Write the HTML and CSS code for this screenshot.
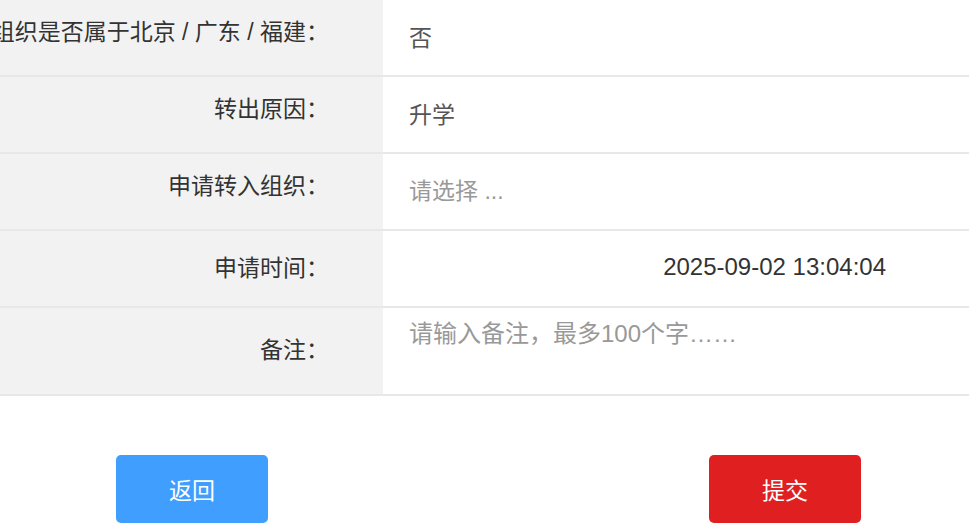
FILE: index.html
```html
<!DOCTYPE html>
<html lang="zh-CN">
<head>
    <meta charset="UTF-8">
    <meta name="viewport" content="width=device-width, initial-scale=1.0">
    <title>组织关系转接申请</title>
    <link rel="stylesheet" href="styles.css">
</head>
<body>
    <div class="form-table">
        <div class="row raised">
            <div class="label"><span>转出组织是否属于北京 / 广东 / 福建：</span></div>
            <div class="value">否</div>
        </div>
        <div class="row raised">
            <div class="label"><span>转出原因：</span></div>
            <div class="value">升学</div>
        </div>
        <div class="row raised">
            <div class="label"><span>申请转入组织：</span></div>
            <div class="value placeholder">请选择 ...</div>
        </div>
        <div class="row">
            <div class="label"><span>申请时间：</span></div>
            <div class="value date">2025-09-02 13:04:04</div>
        </div>
        <div class="row tall">
            <div class="label"><span>备注：</span></div>
            <div class="value">
                <textarea class="remark" placeholder="请输入备注，最多100个字……"></textarea>
            </div>
        </div>
    </div>

    <div class="actions">
        <button class="btn btn-back">返回</button>
        <button class="btn btn-submit">提交</button>
    </div>
</body>
</html>
```

FILE: styles.css
```css
* {
    box-sizing: border-box;
}
body {
    margin: 0;
    font-family: "Liberation Sans", "Noto Sans CJK SC", sans-serif;
    font-size: 23px;
    color: #333;
    background: #fff;
    overflow: hidden;
}
.form-table {
    width: 100%;
}
.row {
    display: flex;
    height: 77px;
    border-bottom: 2px solid #e8e8e8;
}
.row.tall {
    height: 88px;
}
.label {
    width: 383px;
    flex-shrink: 0;
    display: flex;
    justify-content: flex-end;
    align-items: center;
    padding-right: 54px;
    padding-bottom: 6px;
    background: #f2f2f2;
    white-space: nowrap;
    color: #333;
}
.row.raised .label {
    padding-bottom: 16px;
}
.value {
    flex: 1;
    display: flex;
    align-items: center;
    padding-left: 26px;
    padding-bottom: 3px;
    color: #555;
}
.value.placeholder {
    color: #999;
    padding-bottom: 6px;
}
.value.date {
    justify-content: flex-end;
    padding-right: 83px;
    color: #333;
    font-size: 24px;
}
.remark {
    align-self: stretch;
    width: 100%;
    margin: 0;
    padding: 6px 0 0;
    border: none;
    outline: none;
    resize: none;
    font-family: inherit;
    font-size: 24px;
    color: #555;
    background: transparent;
}
.remark::placeholder {
    color: #999;
}
.actions {
    display: flex;
    gap: 441px;
    padding: 59px 0 0 116px;
}
.btn {
    width: 152px;
    height: 68px;
    border: none;
    border-radius: 5px;
    color: #fff;
    font-family: "Noto Sans CJK SC", sans-serif;
    font-size: 23px;
    cursor: pointer;
}
.btn-back {
    background-color: #409eff;
}
.btn-submit {
    background-color: #e02020;
}
```
